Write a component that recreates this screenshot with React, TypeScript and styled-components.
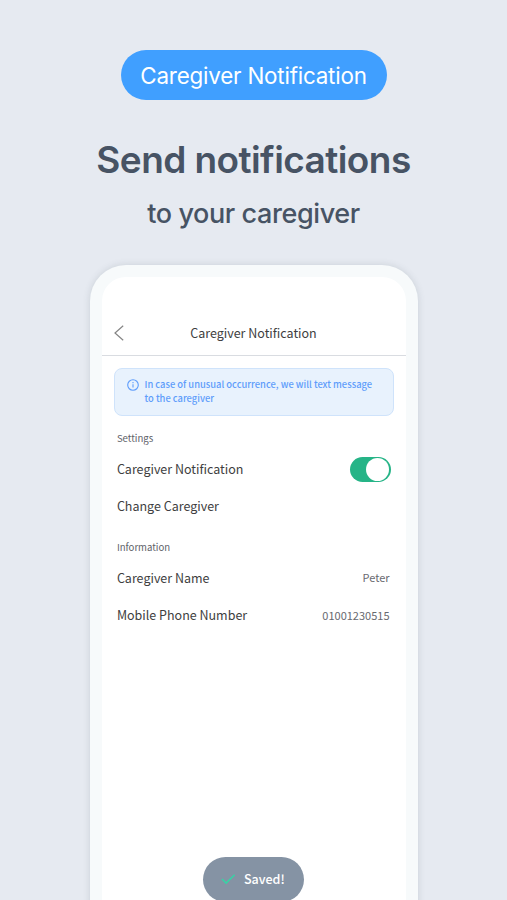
import React from "react";
import styled, { createGlobalStyle } from "styled-components";

const GlobalStyle = createGlobalStyle`
  *, *::before, *::after { box-sizing: border-box; }
  body {
    margin: 0;
    background: #e6eaf1;
  }
`;

const Page = styled.main`
  height: 900px;
  overflow: hidden;
  display: flex;
  flex-direction: column;
  align-items: center;
  padding-top: 50px;
  background: #e6eaf1;
  color: #475364;
  font-family: Inter, "Noto Sans", sans-serif;
`;

const Badge = styled.div`
  flex: none;
  width: 266px;
  height: 50px;
  border-radius: 25px;
  background: #409fff;
  color: #fff;
  font-size: 22.4px;
  letter-spacing: -0.2px;
  line-height: 51px;
  text-align: center;
  white-space: nowrap;
`;

const Title = styled.h1`
  margin: 37px 0 0;
  font-size: 37px;
  font-weight: 600;
  letter-spacing: -0.57px;
  line-height: 46px;
  white-space: nowrap;
`;

const Subtitle = styled.p`
  margin: 13px 0 0;
  font-size: 27px;
  font-weight: 500;
  letter-spacing: -0.4px;
  line-height: 36px;
  white-space: nowrap;
`;

const Phone = styled.section`
  flex: none;
  width: 328px;
  height: 700px;
  margin-top: 33px;
  padding: 12px 12px 0;
  border-radius: 36px 36px 0 0;
  background: #f7fafb;
  box-shadow: 0 0 7px rgba(60, 75, 90, 0.17);
`;

const Screen = styled.div`
  height: 100%;
  border-radius: 24px 24px 0 0;
  background: #fff;
  color: #3e3e40;
  font-family: "Noto Sans CJK KR", "Noto Sans", sans-serif;
`;

const Header = styled.header`
  display: grid;
  grid-template-columns: 34px 1fr 34px;
  align-items: center;
  height: 79px;
  padding: 35px 0 1px;
  border-bottom: 1px solid #d9dce1;
`;

const BackIcon = styled.svg`
  display: block;
  margin-left: 11px;
`;

const HeaderTitle = styled.h2`
  margin: 0;
  font-size: 12.5px;
  font-weight: 400;
  line-height: 20px;
  text-align: center;
`;

const Notice = styled.div`
  display: flex;
  gap: 6px;
  width: 280px;
  height: 48px;
  margin: 12px 0 0 12px;
  padding: 8px 0 0 12px;
  border: 1px solid #cfe3fb;
  border-radius: 8px;
  background: #e8f2fd;
  color: #5e9dfb;
  font-size: 9.35px;
  font-weight: 500;
  line-height: 14px;
`;

const NoticeIcon = styled.svg`
  flex: none;
  margin-top: 2px;
`;

const Group = styled.section<{ $top: number }>`
  padding: ${({ $top }) => $top}px 16px 0 15.4px;
`;

const GroupTitle = styled.h3`
  margin: 0;
  font-size: 9.6px;
  font-weight: 400;
  line-height: 14px;
  color: #606168;
`;

const Row = styled.div<{ $height: number }>`
  display: flex;
  align-items: center;
  justify-content: space-between;
  height: ${({ $height }) => $height}px;
  font-size: 12.5px;
  padding-bottom: 2px;
`;

const Value = styled.span`
  font-size: 11px;
  color: #68696f;
`;

const Toggle = styled.button`
  display: flex;
  justify-content: flex-end;
  width: 41px;
  height: 25px;
  margin: 2px -1px 0 0;
  padding: 1px 1.5px 1px 1px;
  border: 0;
  border-radius: 13px;
  background: #26b487;
`;

const Knob = styled.span`
  width: 23px;
  height: 23px;
  border-radius: 50%;
  background: #fff;
`;

const Toast = styled.div`
  position: absolute;
  top: 857px;
  left: 203px;
  display: flex;
  align-items: center;
  gap: 8px;
  width: 101px;
  height: 45px;
  padding: 0 0 2px 18px;
  border-radius: 23px;
  background: #8593a4;
  color: #fff;
  font-family: "Noto Sans CJK KR", "Noto Sans", sans-serif;
  font-size: 12.5px;
  font-weight: 500;
`;

export default function App() {
  return (
    <>
      <GlobalStyle />
      <Page>
        <Badge>Caregiver Notification</Badge>
        <Title>Send notifications</Title>
        <Subtitle>to your caregiver</Subtitle>
        <Phone>
          <Screen>
            <Header>
              <BackIcon width="12" height="16" viewBox="0 0 12 16" fill="none" stroke="#858585" strokeWidth="1.2">
                <path d="M10.2 0.8 2 8l8.2 7.2" />
              </BackIcon>
              <HeaderTitle>Caregiver Notification</HeaderTitle>
            </Header>
            <Notice>
              <NoticeIcon width="12" height="12" viewBox="0 0 12 12" fill="none" stroke="#5e9dfb">
                <circle cx="6" cy="6" r="5.3" strokeWidth="1.1" />
                <path d="M6 5.3v3.3M6 3.1v1.1" strokeWidth="1.1" />
              </NoticeIcon>
              <div>
                In case of unusual occurrence, we will text message
                <br />
                to the caregiver
              </div>
            </Notice>
            <Group $top={15}>
              <GroupTitle>Settings</GroupTitle>
              <Row $height={48}>
                Caregiver Notification
                <Toggle aria-label="Caregiver Notification" aria-pressed="true">
                  <Knob />
                </Toggle>
              </Row>
              <Row $height={27}>Change Caregiver</Row>
            </Group>
            <Group $top={20}>
              <GroupTitle>Information</GroupTitle>
              <Row $height={48}>
                Caregiver Name
                <Value>Peter</Value>
              </Row>
              <Row $height={27}>
                Mobile Phone Number
                <Value>01001230515</Value>
              </Row>
            </Group>
          </Screen>
        </Phone>
        <Toast role="status">
          <svg width="15" height="12" viewBox="0 0 15 12" fill="none" stroke="#37d3a5" strokeWidth="1.5">
            <path d="m1 6 4.1 4.1L13.6 1.7" />
          </svg>
          Saved!
        </Toast>
      </Page>
    </>
  );
}
